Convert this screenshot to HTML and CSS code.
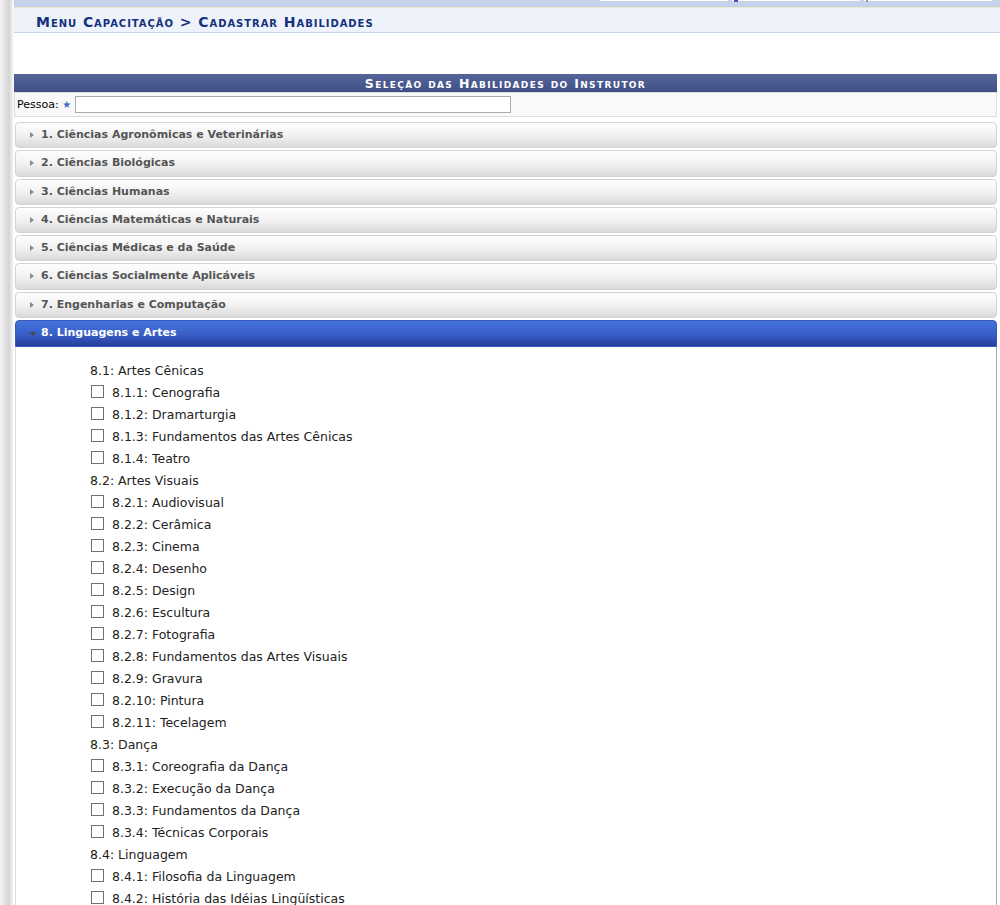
FILE: index.html
```html
<!DOCTYPE html>
<html lang="pt-BR">
<head>
    <meta charset="UTF-8">
    <title>Cadastrar Habilidades</title>
    <link rel="stylesheet" href="styles.css">
</head>
<body>
    <div class="container">
        <div class="topbar">
            <span class="top-field f1"></span>
            <span class="top-field f2"><i class="mark blue"></i></span>
            <span class="top-field f3"><i class="mark gray"></i></span>
        </div>
        <div class="breadcrumb">
            <h2>Menu Capacitação &gt; Cadastrar Habilidades</h2>
        </div>

        <table class="formulario">
            <caption>Seleção das Habilidades do Instrutor</caption>
            <tr>
                <td class="pessoa">
                    <label for="pessoa">Pessoa:</label>
                    <span class="obrigatorio">&#9733;</span>
                    <input type="text" id="pessoa">
                </td>
            </tr>
        </table>

        <div class="accordion" id="accordion"></div>
    </div>

    <script>
        // Areas de conhecimento e suas habilidades
        const areas = [
            '1. Ciências Agronômicas e Veterinárias',
            '2. Ciências Biológicas',
            '3. Ciências Humanas',
            '4. Ciências Matemáticas e Naturais',
            '5. Ciências Médicas e da Saúde',
            '6. Ciências Socialmente Aplicáveis',
            '7. Engenharias e Computação',
            '8. Linguagens e Artes'
        ];

        const habilidades = {
            '8': [
                { grupo: '8.1: Artes Cênicas', itens: ['8.1.1: Cenografia', '8.1.2: Dramarturgia', '8.1.3: Fundamentos das Artes Cênicas', '8.1.4: Teatro'] },
                { grupo: '8.2: Artes Visuais', itens: ['8.2.1: Audiovisual', '8.2.2: Cerâmica', '8.2.3: Cinema', '8.2.4: Desenho', '8.2.5: Design', '8.2.6: Escultura', '8.2.7: Fotografia', '8.2.8: Fundamentos das Artes Visuais', '8.2.9: Gravura', '8.2.10: Pintura', '8.2.11: Tecelagem'] },
                { grupo: '8.3: Dança', itens: ['8.3.1: Coreografia da Dança', '8.3.2: Execução da Dança', '8.3.3: Fundamentos da Dança', '8.3.4: Técnicas Corporais'] },
                { grupo: '8.4: Linguagem', itens: ['8.4.1: Filosofia da Linguagem', '8.4.2: História das Idéias Lingüísticas', '8.4.3: Linguística Aplicada'] }
            ]
        };

        const accordion = document.getElementById('accordion');
        const aberta = '8';

        areas.forEach(nome => {
            const num = nome.split('.')[0];
            const header = document.createElement('h3');
            header.className = 'acc-header' + (num === aberta ? ' active' : '');
            header.innerHTML = '<span class="arrow"></span>' + nome;
            accordion.appendChild(header);

            if (num === aberta) {
                const content = document.createElement('div');
                content.className = 'acc-content';
                habilidades[num].forEach(g => {
                    const grupo = document.createElement('div');
                    grupo.className = 'grupo';
                    grupo.textContent = g.grupo;
                    content.appendChild(grupo);
                    g.itens.forEach(item => {
                        const label = document.createElement('label');
                        label.className = 'item';
                        label.innerHTML = '<input type="checkbox"> ' + item;
                        content.appendChild(label);
                    });
                });
                accordion.appendChild(content);
            }
        });
    </script>
</body>
</html>
```

FILE: styles.css
```css
body {
    margin: 0;
    font-family: "DejaVu Sans", Verdana, sans-serif;
    background: linear-gradient(to right, #f3f3f3 0, #e2e2e2 5px, #d4d4d4 9px, #ececec 12px, #fff 14px);
    color: #222;
}
.container {
    margin-left: 14px;
    background: #fff;
    min-height: 905px;
}
.topbar {
    height: 7px;
    background: #c4d2eb;
    position: relative;
    border-bottom: 1px solid #ece9c8;
}
.top-field {
    position: absolute;
    top: 0;
    height: 1px;
    background: #fff;
}
.f1 { left: 586px; width: 128px; }
.f2 { left: 718px; width: 128px; }
.f3 { left: 850px; width: 128px; }
.mark {
    position: absolute;
    top: 0;
    height: 2px;
}
.mark.blue { left: 2px; width: 4px; background: #5a4ab8; }
.mark.gray { left: 2px; width: 2px; background: #999; }
.breadcrumb {
    height: 24px;
    background: #eef2fb;
    border-bottom: 1px solid #c4d2eb;
}
.breadcrumb h2 {
    margin: 0;
    padding: 6px 0 0 22px;
    font-size: 14px;
    font-variant: small-caps;
    font-weight: bold;
    color: #15307c;
    letter-spacing: 0.95px;
    line-height: 16px;
}
.formulario {
    width: 983px;
    margin-top: 41px;
    border-collapse: collapse;
}
.formulario caption {
    background: linear-gradient(#56659a, #3f4f86);
    color: #fff;
    font-size: 12.5px;
    font-weight: bold;
    font-variant: small-caps;
    letter-spacing: 1.35px;
    height: 18px;
    line-height: 20px;
    text-align: center;
}
.pessoa {
    background: #f9f9f9;
    border: 1px solid #ddd;
    height: 23px;
    padding: 0 0 0 2px;
    font-size: 11px;
    color: #000;
}
.pessoa input {
    width: 430px;
    height: 13px;
    border: 1px solid #aaa;
    padding: 1px 2px;
    vertical-align: middle;
}
.obrigatorio {
    color: #3c6cc8;
    font-size: 10px;
}
.accordion {
    margin-top: 5px;
    width: 983px;
}
.acc-header {
    margin: 2px 0 0 1px;
    height: 24.3px;
    line-height: 24px;
    padding-left: 25px;
    font-size: 11px;
    font-weight: bold;
    color: #555;
    background: linear-gradient(#fefefe 0, #f2f2f2 50%, #dadada 100%);
    border: 1px solid #d3d3d3;
    border-radius: 4px;
    position: relative;
}
.arrow {
    position: absolute;
    left: 14px;
    top: 9px;
    border-left: 4px solid #8a8a8a;
    border-top: 3.5px solid transparent;
    border-bottom: 3.5px solid transparent;
}
.acc-header.active {
    background: linear-gradient(#4473dc 0, #3a60c8 50%, #263f9c 100%);
    border-color: #3a58b8;
    color: #fff;
    border-radius: 4px 4px 0 0;
    height: 25px;
}
.acc-header.active .arrow {
    left: 13px;
    top: 11px;
    border-top: 4px solid #4a4a58;
    border-left: 4px solid transparent;
    border-right: 4px solid transparent;
    border-bottom: none;
}
.acc-content {
    margin-left: 1px;
    border-right: 1px solid #aaa;
    border-left: 1px solid #ddd;
    padding: 13px 0 20px 74px;
    font-size: 12.5px;
    color: #222;
}
.grupo {
    height: 22px;
    line-height: 22px;
}
.item {
    display: block;
    height: 22px;
    line-height: 22px;
}
.item input {
    appearance: none;
    width: 13px;
    height: 13px;
    margin: 0 4px 0 1px;
    border: 1px solid #707070;
    background: #fff;
    vertical-align: -1px;
}
```
